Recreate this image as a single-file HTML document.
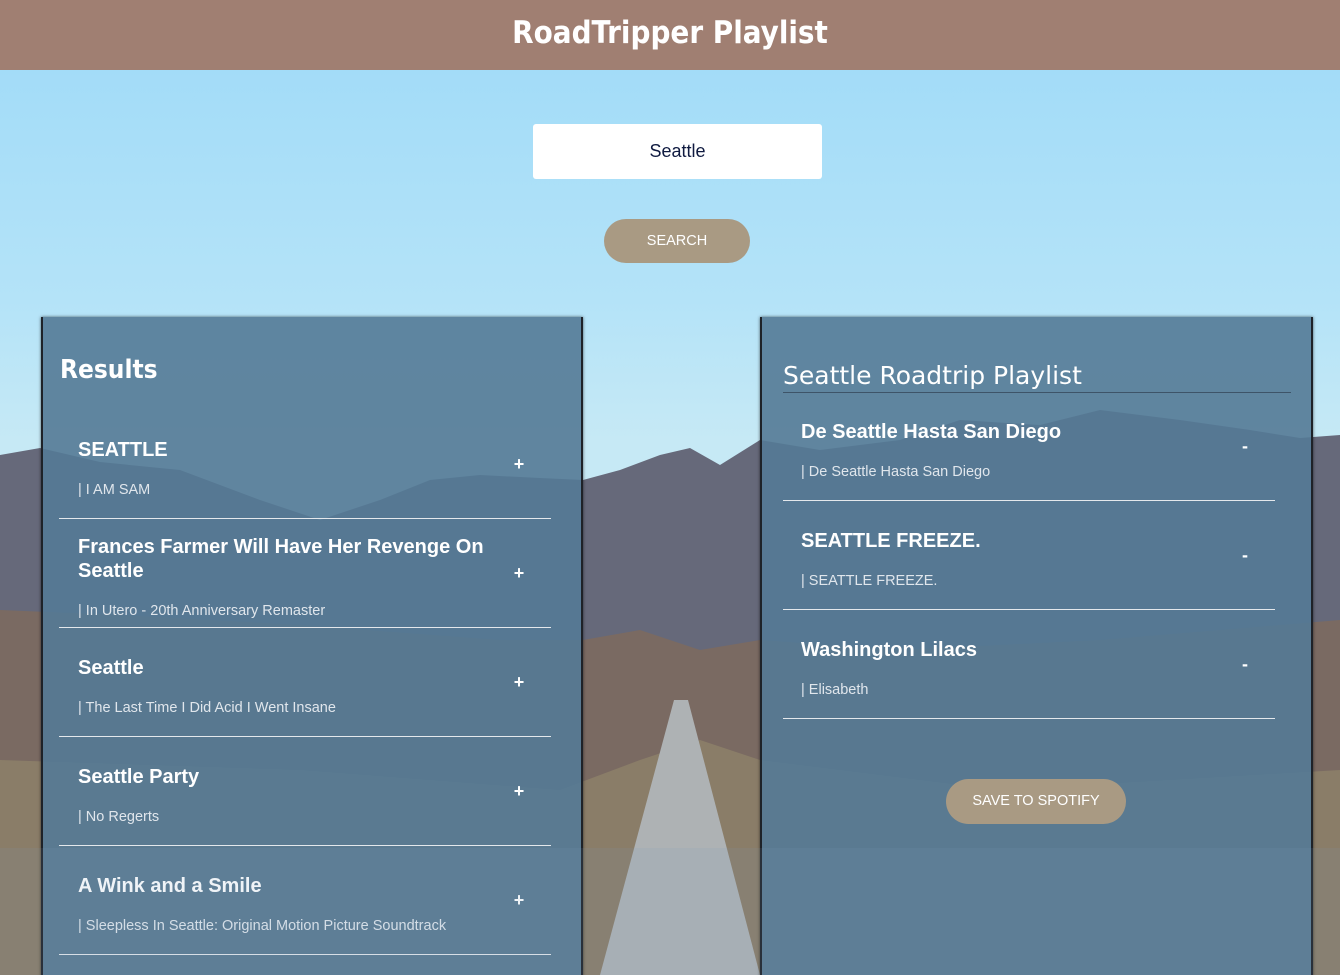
<!DOCTYPE html>
<html><head><meta charset="utf-8"><style>
*{box-sizing:border-box;margin:0;padding:0}
html,body{width:1340px;height:975px;overflow:hidden}
body{position:relative;font-family:"Liberation Sans",Arial,sans-serif;background:linear-gradient(#a3dcf8 70px,#b4e3f8 300px,#c6e9f5 440px)}
#bg{position:absolute;left:0;top:0}
header{position:absolute;left:0;top:0;width:1340px;height:70px;background:#a07f72;color:#fff;text-align:center;font-family:"DejaVu Sans",sans-serif;font-stretch:condensed;font-size:31px;font-weight:bold;line-height:66px}
.search{position:absolute;left:533px;top:124px;width:289px;height:55px;background:#fff;border-radius:3px;text-align:center;line-height:55px;font-size:18px;color:#0f1a40}
.btn{position:absolute;background:#a99a83;color:#fff;border-radius:24px;text-align:center;font-size:14.5px}
.panel{position:absolute;top:317px;height:680px;background:rgba(84,122,150,0.9);border-left:2px solid #1e2228;border-right:2px solid #1e2228;box-shadow:0 0 3px rgba(0,0,0,.6)}
.item{position:absolute;height:109px;border-bottom:1.5px solid #e4e8ec;color:#fff;display:flex;align-items:center;padding-top:10px}
.item .t{flex:1}
.item h3{font-size:20px;line-height:24px;font-weight:bold;margin-bottom:18px}
.item p{font-size:14.5px;line-height:20px;color:#e0e6ec}
.item .s{width:36px;font-size:18px;font-weight:bold;text-align:center;margin-top:-10px}
</style></head><body>
<svg id="bg" width="1340" height="975">
<polygon points="0,455 40,448 100,462 180,470 260,500 320,520 380,500 430,480 480,475 540,478 583,480 620,470 660,455 690,448 720,465 760,440 820,450 900,440 960,420 1040,425 1100,410 1180,420 1250,430 1300,438 1340,435 1340,975 0,975" fill="#66697a"/>
<polygon points="0,610 120,615 300,625 500,640 583,640 640,630 700,650 760,640 900,650 1100,640 1340,620 1340,975 0,975" fill="#7a6a62"/>
<polygon points="0,760 300,770 560,790 640,760 700,740 760,760 1000,790 1340,770 1340,975 0,975" fill="#8a7d68"/>
<polygon points="674,700 688,700 760,975 600,975" fill="#aeb2b4"/>
</svg>
<header>RoadTripper Playlist</header>
<div class="search">Seattle</div>
<div class="btn" style="left:604px;top:219px;width:146px;height:44px;line-height:44px">SEARCH</div>

<div class="panel" style="left:41px;width:542px">
 <div style="position:absolute;left:17px;top:38px;color:#fff;font-family:'DejaVu Sans',sans-serif;font-stretch:condensed;font-weight:bold;font-size:26px">Results</div>
 <div class="item" style="left:16px;width:492px;top:93px;padding-left:19px;padding-right:14px"><div class="t"><h3>SEATTLE</h3><p>| I AM SAM</p></div><div class="s">+</div></div>
 <div class="item" style="left:16px;width:492px;top:202px;padding-left:19px;padding-right:14px"><div class="t"><h3>Frances Farmer Will Have Her Revenge On Seattle</h3><p>| In Utero - 20th Anniversary Remaster</p></div><div class="s">+</div></div>
 <div class="item" style="left:16px;width:492px;top:311px;padding-left:19px;padding-right:14px"><div class="t"><h3>Seattle</h3><p>| The Last Time I Did Acid I Went Insane</p></div><div class="s">+</div></div>
 <div class="item" style="left:16px;width:492px;top:420px;padding-left:19px;padding-right:14px"><div class="t"><h3>Seattle Party</h3><p>| No Regerts</p></div><div class="s">+</div></div>
 <div class="item" style="left:16px;width:492px;top:529px;padding-left:19px;padding-right:14px"><div class="t"><h3>A Wink and a Smile</h3><p>| Sleepless In Seattle: Original Motion Picture Soundtrack</p></div><div class="s">+</div></div>
</div>

<div class="panel" style="left:760px;width:553px">
 <div style="position:absolute;left:21px;top:41px;width:508px;height:35px;border-bottom:1.5px solid #3e5468;color:#fff;font-family:'DejaVu Sans',sans-serif;font-size:25px;line-height:36px">Seattle Roadtrip Playlist</div>
 <div class="item" style="left:21px;width:492px;top:75px;padding-left:18px;padding-right:12px"><div class="t"><h3>De Seattle Hasta San Diego</h3><p>| De Seattle Hasta San Diego</p></div><div class="s">-</div></div>
 <div class="item" style="left:21px;width:492px;top:184px;padding-left:18px;padding-right:12px"><div class="t"><h3>SEATTLE FREEZE.</h3><p>| SEATTLE FREEZE.</p></div><div class="s">-</div></div>
 <div class="item" style="left:21px;width:492px;top:293px;padding-left:18px;padding-right:12px"><div class="t"><h3>Washington Lilacs</h3><p>| Elisabeth</p></div><div class="s">-</div></div>
 <div class="btn" style="left:184px;top:462px;width:180px;height:45px;line-height:45px">SAVE TO SPOTIFY</div>
</div>
<div style="position:absolute;left:0;top:848px;width:1340px;height:127px;background:rgba(120,160,190,0.12)"></div>
</body></html>
